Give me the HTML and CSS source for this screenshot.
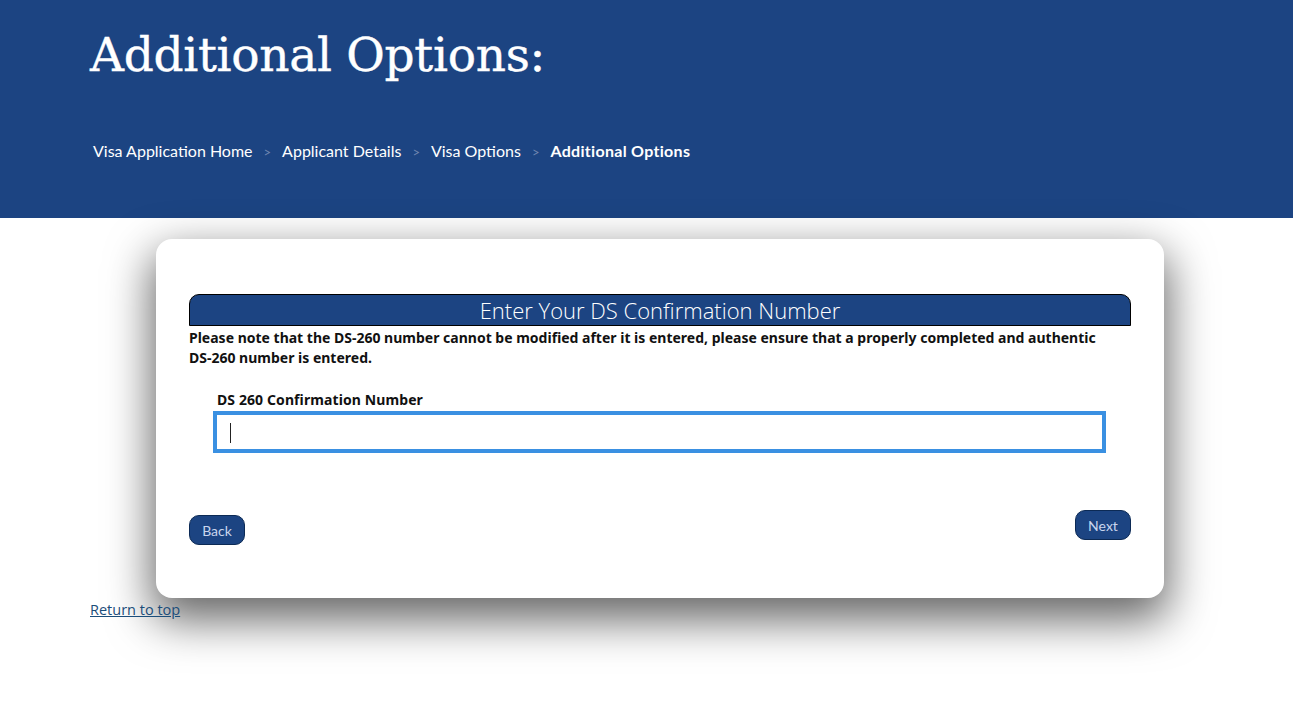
FILE: index.html
```html
<!DOCTYPE html>
<html>
<head>
<meta charset="utf-8">
<link rel="stylesheet" href="styles.css">
</head>
<body>
<header class="hero">
  <h1 class="hero-title">Additional Options:</h1>
  <nav class="crumbs">
    <span class="crumb">Visa Application Home</span>
    <span class="sep">&gt;</span>
    <span class="crumb">Applicant Details</span>
    <span class="sep">&gt;</span>
    <span class="crumb">Visa Options</span>
    <span class="sep">&gt;</span>
    <span class="crumb current">Additional Options</span>
  </nav>
</header>
<main class="main">
  <section class="card">
    <h2 class="bar">Enter Your DS Confirmation Number</h2>
    <p class="note">Please note that the <span class="nw">DS-260</span> number cannot be modified after it is entered, please ensure that a properly completed and authentic <span class="nw">DS-260</span> number is entered.</p>
    <div class="field">
      <label class="label">DS 260 Confirmation Number</label>
      <div class="input"><span class="caret"></span></div>
    </div>
    <div class="actions">
      <button class="btn back">Back</button>
      <button class="btn next">Next</button>
    </div>
  </section>
  <a class="top-link" href="#">Return to top</a>
</main>
</body>
</html>
```
FILE: styles.css
```css
* { box-sizing: border-box; }
html, body { margin: 0; padding: 0; background: #fff; }
body { font-family: "Noto Sans", sans-serif; min-height: 720px; }

.hero {
  background: #1c4482;
  height: 218px;
  padding: 24px 0 0 90px;
  color: #fff;
}
.hero-title {
  margin: 0;
  font-family: "DejaVu Serif", serif;
  font-weight: 400;
  font-size: 47px;
  line-height: 62px;
  letter-spacing: -0.3px;
  -webkit-text-stroke: 0.4px #fff;
}
.crumbs {
  margin-top: 55px;
  padding-left: 3px;
  display: flex;
  align-items: baseline;
  font-family: Lato, sans-serif;
  font-size: 16px;
  color: #fff;
}
.sep { color: #6f86b0; margin: 0 11px; font-size: 13px; }
.current { font-weight: 700; letter-spacing: 0.3px; }

.main { padding: 21px 0 0 90px; }
.card {
  margin-left: 66px;
  width: 1008px;
  height: 359px;
  background: #fff;
  border-radius: 16px;
  box-shadow: 0 18px 45px 4px rgba(0,0,0,0.6);
  padding: 55px 33px 0 33px;
  display: flex;
  flex-direction: column;
  position: relative;
}
.bar {
  margin: 0;
  height: 32px;
  background: #1c4482;
  border: 1px solid #000;
  border-radius: 10px 10px 0 0;
  color: #fff;
  font-family: "Open Sans", sans-serif;
  font-weight: 300;
  font-size: 22px;
  line-height: 30px;
  text-align: center;
}
.note {
  margin: 2px 0 0;
  font-size: 14px;
  font-weight: 700;
  line-height: 20px;
  color: #111;
  letter-spacing: 0;
}
.nw { white-space: nowrap; }
.field { padding: 22px 0 0 24px; width: 917px; }
.label {
  display: block;
  font-size: 14px;
  font-weight: 700;
  line-height: 20px;
  color: #111;
  padding-left: 4px;
  letter-spacing: 0.1px;
}
.input {
  margin-top: 1px;
  height: 42px;
  border: 4px solid #3a90e2;
  padding: 8px 13px;
}
.caret { display: block; width: 1px; height: 20px; background: #222; }
.actions {
  display: flex;
  justify-content: space-between;
  align-items: flex-start;
  margin-top: 57px;
}
.btn {
  background: #1c4482;
  border: 1px solid #0c2a55;
  color: #c9d6ee;
  font-family: Lato, sans-serif;
  font-size: 14px;
  border-radius: 10px;
  width: 56px;
  height: 30px;
  padding: 0;
}
.back { margin-top: 5px; }
.top-link {
  display: inline-block;
  margin-top: 1px;
  font-family: "Open Sans", sans-serif;
  font-size: 14.5px;
  color: #1b4d7a;
  text-decoration: underline;
  position: relative;
}
```
